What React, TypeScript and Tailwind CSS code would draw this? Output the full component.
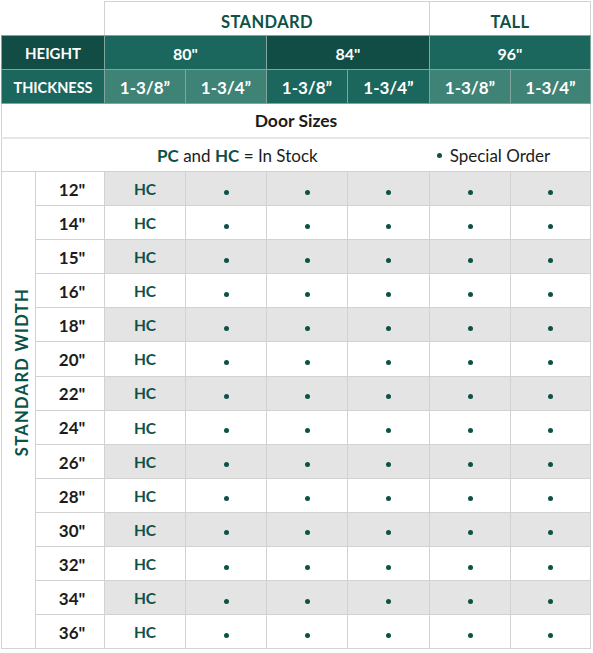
import React from "react";

const widths = ["12", "14", "15", "16", "18", "20", "22", "24", "26", "28", "30", "32", "34", "36"];

const line = "border border-[#d2d2d2]";
const head = "border border-[#7fa59d] text-white font-bold text-center pt-[2px]";

function Dot() {
    return <span className="inline-block w-[5px] h-[5px] rounded-full bg-[#0d5247] align-middle" />;
}

export default function App() {
    return (
        <div className="w-[593px] h-[653px] bg-white font-['Lato','Liberation_Sans',sans-serif]">
            <table className="table-fixed border-collapse ml-[1px] mt-[1px]" style={{ width: 589 }}>
                <colgroup>
                    <col className="w-[34px]" />
                    <col className="w-[69px]" />
                    <col className="w-[81px]" />
                    <col className="w-[81px]" />
                    <col className="w-[81px]" />
                    <col className="w-[82px]" />
                    <col className="w-[81px]" />
                    <col className="w-[80px]" />
                </colgroup>
                <tbody>
                    <tr className="h-[34px]">
                        <td colSpan={2} className="border-b border-[#7fa59d]"></td>
                        <td colSpan={4} className={`${line} border-b-[#7fa59d] text-center text-[16.5px] font-bold text-[#0d5247] tracking-wide pt-[7px]`}>STANDARD</td>
                        <td colSpan={2} className={`${line} border-b-[#7fa59d] text-center text-[16.5px] font-bold text-[#0d5247] tracking-wide pt-[7px]`}>TALL</td>
                    </tr>
                    <tr className="h-[34px] text-[16px]">
                        <td colSpan={2} className={`${head} bg-[#114d44] text-[15px]`}>HEIGHT</td>
                        <td colSpan={2} className={`${head} bg-[#1b675d]`}>80"</td>
                        <td colSpan={2} className={`${head} bg-[#114d44]`}>84"</td>
                        <td colSpan={2} className={`${head} bg-[#1b675d]`}>96"</td>
                    </tr>
                    <tr className="h-[34px] text-[17px]">
                        <td colSpan={2} className={`${head} bg-[#1b675d] text-[14.5px]`}>THICKNESS</td>
                        <td className={`${head} bg-[#3f8276]`}>1-3/8”</td>
                        <td className={`${head} bg-[#3f8276]`}>1-3/4”</td>
                        <td className={`${head} bg-[#1b675d]`}>1-3/8”</td>
                        <td className={`${head} bg-[#1b675d]`}>1-3/4”</td>
                        <td className={`${head} bg-[#3f8276]`}>1-3/8”</td>
                        <td className={`${head} bg-[#3f8276]`}>1-3/4”</td>
                    </tr>
                    <tr className="h-[34px]">
                        <td colSpan={8} className="border border-[#d2d2d2] border-b-2 border-b-[#e6e6e6] text-center text-[17.5px] font-bold text-[#1c1c1c] pt-[2px]">Door Sizes</td>
                    </tr>
                    <tr className="h-[34px]">
                        <td colSpan={8} className={`${line} pt-[2px]`}>
                            <div className="flex items-center text-[17px] text-[#1c1c1c]">
                                <span className="ml-[155px]">
                                    <b className="text-[#0d5247]">PC</b> and <b className="text-[#0d5247]">HC</b> = In Stock
                                </span>
                                <span className="ml-[119px] flex items-center gap-[8px]">
                                    <Dot />
                                    Special Order
                                </span>
                            </div>
                        </td>
                    </tr>
                    {widths.map((w, i) => {
                        const bg = i % 2 === 0 ? "bg-[#e4e4e4]" : "bg-white";
                        return (
                            <tr key={w} className="h-[34.1px]">
                                {i === 0 && (
                                    <td rowSpan={widths.length} className={`${line} text-center`}>
                                        <span className="inline-block [writing-mode:vertical-rl] rotate-180 text-[16.5px] font-bold tracking-[0.08em] text-[#0d5247] ml-[7px] mb-[70px]">
                                            STANDARD WIDTH
                                        </span>
                                    </td>
                                )}
                                <td className={`${line} text-center text-[17px] font-bold text-[#1c1c1c] pl-[4px] pt-[2px]`}>{w}"</td>
                                <td className={`${line} ${bg} text-center text-[15.5px] font-bold text-[#0d5247] pt-[2px]`}>HC</td>
                                {[0, 1, 2, 3, 4].map((c) => (
                                    <td key={c} className={`${line} ${bg} text-center pt-[3px]`}>
                                        <Dot />
                                    </td>
                                ))}
                            </tr>
                        );
                    })}
                </tbody>
            </table>
        </div>
    );
}
